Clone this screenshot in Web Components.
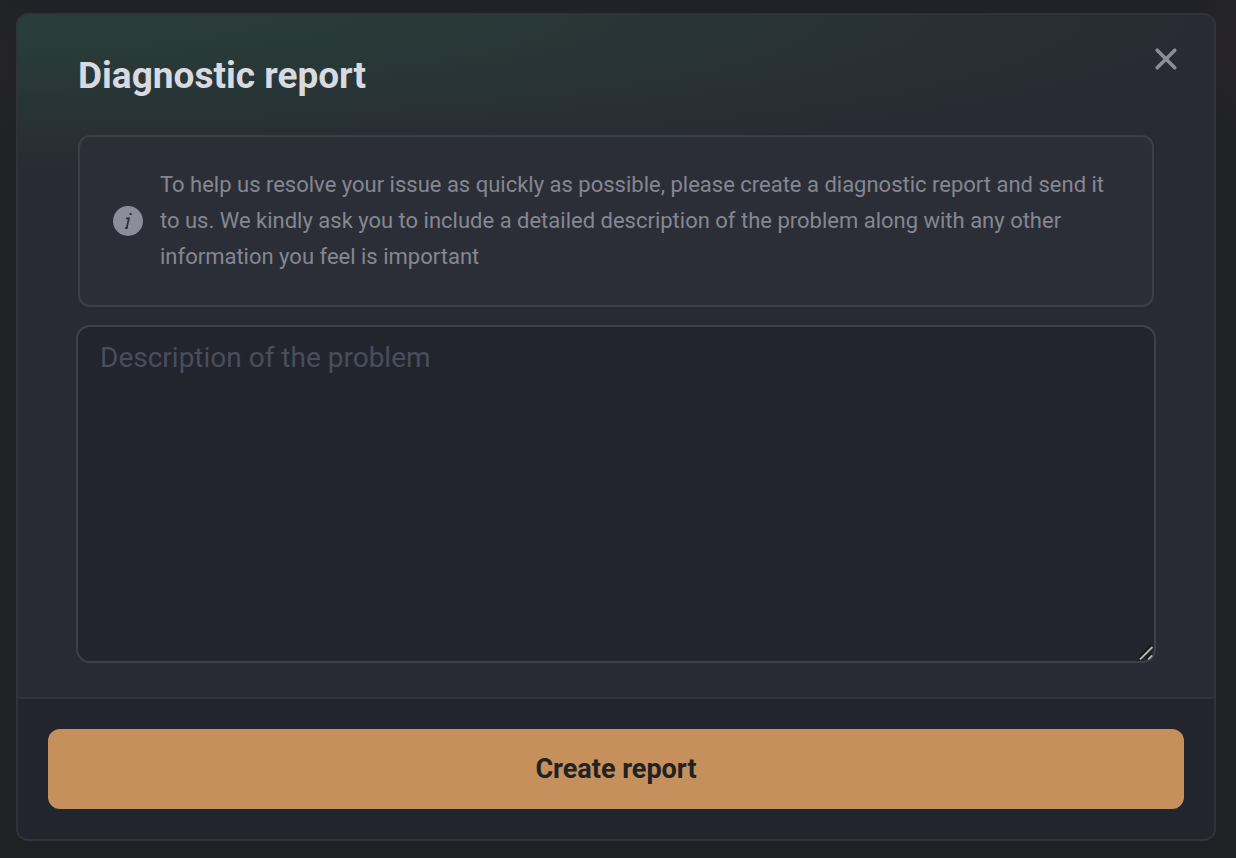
<!DOCTYPE html>
<html lang="en">
<head>
<meta charset="utf-8">
<meta name="viewport" content="width=device-width, initial-scale=1">
<title>Diagnostic report</title>
<style>
html { min-height: 100%; background: #1f2225; }
body {
  margin: 0;
  padding: 13px 20px 17px 16px;
  background:
    radial-gradient(ellipse 40px 110px at 0 60px, #252427, transparent),
    radial-gradient(ellipse 60px 120px at 100% 50px, #272427, transparent),
    linear-gradient(#202226, #1f2225 80px, #1e2224);
  font-family: Roboto, "Liberation Sans", sans-serif;
  color: #d8dae0;
}
</style>
</head>
<body>
<report-dialog>
  <span slot="title">Diagnostic report</span>
  <info-note>To help us resolve your issue as quickly as possible, please create a diagnostic report and send it to us. We kindly ask you to include a detailed description of the problem along with any other information you feel is important</info-note>
  <problem-field label="Description of the problem"></problem-field>
  <action-button slot="footer">Create report</action-button>
</report-dialog>
<script>
const define = (name, html, setup) => customElements.define(name, class extends HTMLElement {
  constructor() {
    super();
    this.attachShadow({ mode: 'open' }).innerHTML = html;
  }
  connectedCallback() { if (setup) setup(this, this.shadowRoot); }
});

define('close-button', `
<style>
  :host { display: block; }
  button { display: block; padding: 8px; border: 0; background: none; color: #8b8d99; cursor: pointer; }
  svg { display: block; }
</style>
<button type="button" aria-label="Close">
  <svg width="24" height="24" viewBox="0 0 24 24" fill="none" stroke="currentColor" stroke-width="3.6" stroke-linecap="round" aria-hidden="true">
    <path d="M3.2 3.2 20.8 20.8M20.8 3.2 3.2 20.8"/>
  </svg>
</button>`);

define('info-note', `
<style>
  :host {
    display: flex; align-items: center; gap: 16px;
    margin: 0 2px; padding: 30px 32px;
    border: 2px solid #3c3f47; border-radius: 12px;
    background: #2c2e37; color: #858791;
  }
  svg { flex: none; }
  p { margin: 0; font-size: 22px; line-height: 36px; font-weight: 400; }
</style>
<svg width="32" height="32" viewBox="0 0 32 32" aria-hidden="true">
  <circle cx="16" cy="16" r="15" fill="#8b8d99"/>
  <g fill="none" stroke="#2c2e37" stroke-linecap="round" stroke-linejoin="round">
    <path d="M18.4 8.9h.5" stroke-width="2"/>
    <path d="M14.8 13.4 17 13 14.7 23" stroke-width="1.7"/>
    <path d="M13.4 23.2 15.6 22.6" stroke-width="1.4"/>
  </g>
</svg>
<p><slot></slot></p>`);

define('problem-field', `
<style>
  :host { display: block; position: relative; }
  textarea {
    display: block; box-sizing: border-box; width: 100%; height: 338px;
    padding: 14px 22px; resize: vertical;
    border: 2px solid #3e414c; border-radius: 14px; outline: none;
    background: #22252d; color: #d8dae2;
    font: 400 28px/34px Roboto, "Liberation Sans", sans-serif;
  }
  textarea::placeholder { color: #494d5c; opacity: 1; }
  textarea::-webkit-resizer { background: transparent; }
  svg { position: absolute; right: 2px; bottom: 2px; pointer-events: none; }
</style>
<textarea></textarea>
<svg width="16" height="16" viewBox="0 0 16 16" fill="none" aria-hidden="true">
  <path d="M1 12.8 13 .8M8.8 13.6l4.6-4.6" stroke="#101114" stroke-width="1.8"/>
  <path d="M2 14.4 14.4 2M10.2 14.4l4-4" stroke="#b9b9bb" stroke-width="1.8"/>
</svg>`, (host, root) => {
  const area = root.querySelector('textarea');
  area.placeholder = host.getAttribute('label');
  area.setAttribute('aria-label', area.placeholder);
});

define('action-button', `
<style>
  :host { display: block; }
  button {
    display: block; width: 100%; padding: 22px 24px;
    border: 0; border-radius: 12px;
    background: #c6905c; color: #202226;
    font: 700 27px/36px Roboto, "Liberation Sans", sans-serif; cursor: pointer;
  }
</style>
<button type="button"><slot></slot></button>`);

define('report-dialog', `
<style>
  :host {
    display: block; overflow: hidden;
    border: 2px solid #30333e; border-radius: 12px;
    background: radial-gradient(ellipse 1200px 155px at 0 0, #283e3a 0%, #283a38 30%, #282b33 100%) no-repeat #282b33;
  }
  header { display: flex; justify-content: space-between; align-items: flex-start; padding: 24px 28px 0 60px; }
  h1 { margin: 0; padding-top: 15px; font-size: 37px; line-height: 44px; font-weight: 700; }
  main { display: grid; gap: 18px; padding: 37px 58px 34px; }
  footer { padding: 30px; border-top: 2px solid #30333e; background: #22252d; }
</style>
<div role="dialog" aria-labelledby="heading">
  <header><h1 id="heading"><slot name="title"></slot></h1><close-button></close-button></header>
  <main><slot></slot></main>
  <footer><slot name="footer"></slot></footer>
</div>`);
</script>
</body>
</html>
